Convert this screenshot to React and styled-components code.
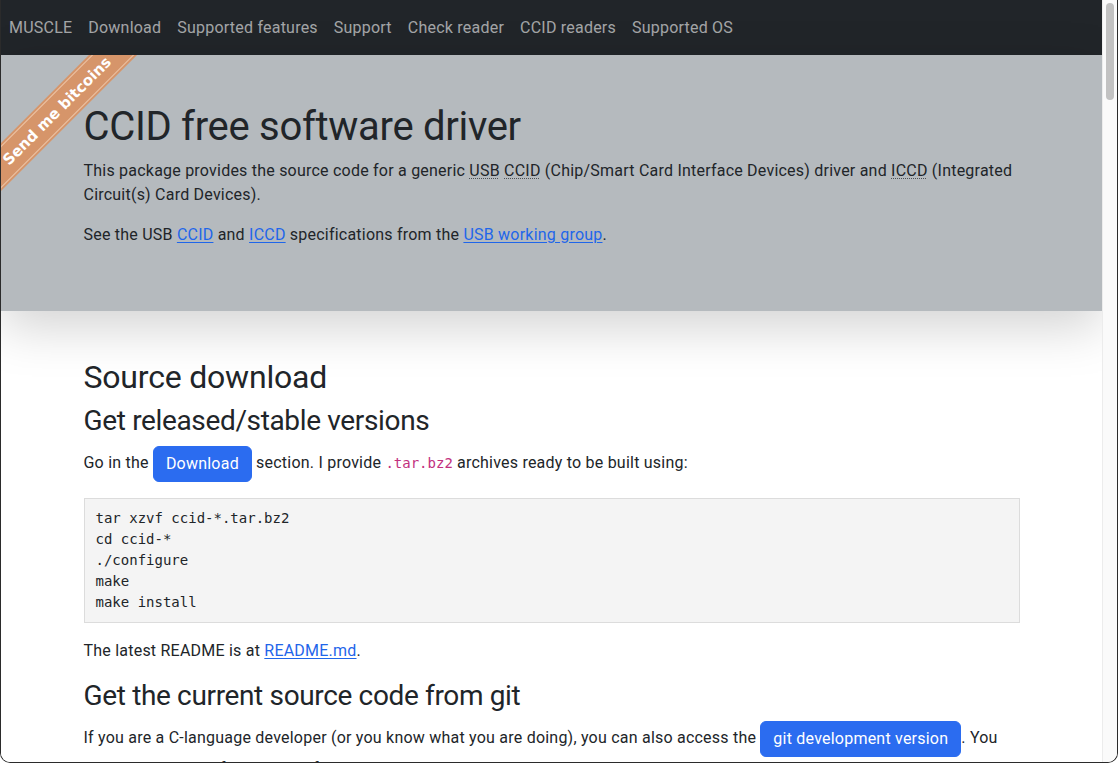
import styled, { createGlobalStyle } from "styled-components";

const GlobalStyle = createGlobalStyle`
  html, body {
    margin: 0;
    padding: 0;
    overflow: hidden;
    background: #fff;
  }
  * { box-sizing: border-box; }
`;

const Window = styled.div`
  width: 1118px;
  height: 763px;
  display: flex;
  border: 1px solid #2b2b2b;
  border-top: none;
  border-radius: 0 0 10px 10px;
  overflow: hidden;
  font-family: Roboto, "Liberation Sans", sans-serif;
  font-size: 16px;
  line-height: 24px;
  letter-spacing: 0.22px;
  color: #212529;
`;

const Viewport = styled.div`
  flex: 1;
  overflow: hidden;
  background: #fff;
`;

const Scrollbar = styled.div`
  width: 15px;
  background: #fafafa;
  border-left: 1px solid #ececec;
  padding: 3px 3px 0 3px;
`;

const Thumb = styled.div`
  height: 97px;
  border-radius: 4px;
  background: #c2c2c2;
`;

const Navbar = styled.nav`
  height: 55px;
  background: #212529;
  display: flex;
  align-items: center;
  gap: 16px;
  padding: 0 8px;
`;

const NavLink = styled.a`
  color: rgba(255, 255, 255, 0.6);
  text-decoration: none;
  font-size: 16px;
`;

const Jumbotron = styled.header`
  position: relative;
  overflow: hidden;
  background: #b5babe;
  padding: 48px 0;
  box-shadow: 0 1rem 3rem rgba(0, 0, 0, 0.175);
`;

const Ribbon = styled.div`
  position: absolute;
  left: -64px;
  top: 39px;
  width: 240px;
  height: 34px;
  transform: rotate(-45deg);
  background: #d6956a;
  color: #fff;
  font-family: "DejaVu Sans", Verdana, sans-serif;
  font-weight: bold;
  font-size: 15px;
  letter-spacing: 0;
  display: flex;
  align-items: center;
  justify-content: center;
  &::before, &::after {
    content: "";
    position: absolute;
    left: 0;
    right: 0;
    height: 1px;
    background: rgba(255, 235, 215, 0.55);
  }
  &::before { top: 2px; }
  &::after { bottom: 2px; }
`;

const Container = styled.div`
  max-width: 960px;
  margin: 0 auto;
  padding: 0 12px;
`;

const Main = styled.main`
  position: relative;
  padding-top: 47px;
`;

const Title = styled.h1`
  font-size: 40px;
  line-height: 48px;
  font-weight: 400;
  letter-spacing: -0.3px;
  margin: 0 0 8px;
`;

const SectionTitle = styled.h2`
  font-size: 32px;
  line-height: 38.4px;
  font-weight: 400;
  letter-spacing: -0.2px;
  margin: 0 0 8px;
`;

const SubTitle = styled.h3`
  font-size: 28px;
  line-height: 33.6px;
  font-weight: 400;
  letter-spacing: -0.35px;
  margin: 0 0 8px;
`;

const Para = styled.p`
  margin: 0 0 16px;
`;

const Abbr = styled.abbr`
  text-decoration: underline dotted;
  text-decoration-thickness: 1px;
  text-decoration-color: rgba(33, 37, 41, 0.7);
  text-underline-offset: 2px;
  cursor: help;
`;

const Link = styled.a`
  color: #1f66ea;
  text-decoration: underline;
  text-underline-offset: 2px;
`;

const Button = styled.a`
  display: inline-block;
  padding: 5px 12px;
  border: 1px solid #2b6cf0;
  border-radius: 6px;
  background: #2b6cf0;
  color: #fff;
  text-decoration: none;
  line-height: 24px;
  vertical-align: middle;
`;

const Code = styled.code`
  font-family: "DejaVu Sans Mono", "Liberation Mono", monospace;
  font-size: 14px;
  letter-spacing: 0;
  color: #c2307e;
`;

const Pre = styled.pre`
  margin: 0 0 16px;
  padding: 9px 11px;
  background: #f4f4f4;
  border: 1px solid #dcdcdc;
  font-family: "DejaVu Sans Mono", "Liberation Mono", monospace;
  font-size: 14px;
  line-height: 21px;
  letter-spacing: 0;
  color: #212529;
`;

const navItems = [
  "MUSCLE",
  "Download",
  "Supported features",
  "Support",
  "Check reader",
  "CCID readers",
  "Supported OS",
];

const buildSteps = [
  "tar xzvf ccid-*.tar.bz2",
  "cd ccid-*",
  "./configure",
  "make",
  "make install",
];

export default function App() {
  return (
    <>
      <GlobalStyle />
      <Window>
        <Viewport>
          <Navbar>
            {navItems.map((item) => (
              <NavLink key={item} href="#">{item}</NavLink>
            ))}
          </Navbar>

          <Jumbotron>
            <Ribbon>Send me bitcoins</Ribbon>
            <Container>
              <Title>CCID free software driver</Title>
              <Para>
                This package provides the source code for a generic{" "}
                <Abbr title="Universal Serial Bus">USB</Abbr>{" "}
                <Abbr title="Chip/Smart Card Interface Devices">CCID</Abbr> (Chip/Smart Card
                Interface Devices) driver and{" "}
                <Abbr title="Integrated Circuit(s) Card Devices">ICCD</Abbr> (Integrated
                Circuit(s) Card Devices).
              </Para>
              <Para>
                See the USB <Link href="#">CCID</Link> and <Link href="#">ICCD</Link>{" "}
                specifications from the <Link href="#">USB working group</Link>.
              </Para>
            </Container>
          </Jumbotron>

          <Main>
            <Container>
              <SectionTitle>Source download</SectionTitle>
              <SubTitle>Get released/stable versions</SubTitle>
              <Para>
                Go in the <Button href="#">Download</Button> section. I provide{" "}
                <Code>.tar.bz2</Code> archives ready to be built using:
              </Para>
              <Pre>{buildSteps.join("\n")}</Pre>
              <Para>
                The latest README is at <Link href="#">README.md</Link>.
              </Para>
              <SubTitle>Get the current source code from git</SubTitle>
              <Para>
                If you are a C-language developer (or you know what you are doing), you can
                also access the <Button href="#">git development version</Button>. You
                should use it only if you need a feature not yet in a released version.
              </Para>
            </Container>
          </Main>
        </Viewport>
        <Scrollbar>
          <Thumb />
        </Scrollbar>
      </Window>
    </>
  );
}
